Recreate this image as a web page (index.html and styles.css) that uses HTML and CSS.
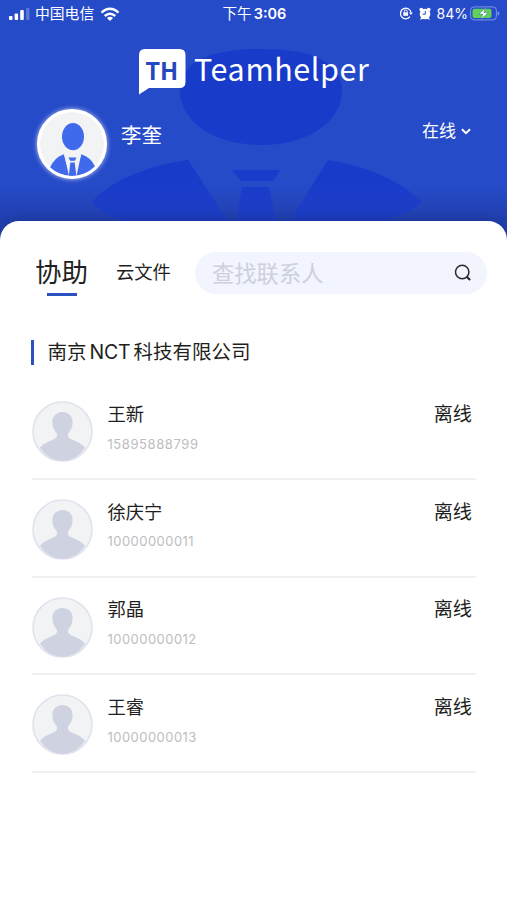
FILE: index.html
```html
<!DOCTYPE html>
<html lang="zh-CN">
<head>
<meta charset="utf-8">
<title>Teamhelper</title>
<link rel="stylesheet" href="styles.css">
</head>
<body>
<svg class="defs" width="0" height="0" aria-hidden="true">
  <symbol id="person" viewBox="0 0 62 62">
    <circle cx="31" cy="31" r="30" fill="#f2f3f5" stroke="#e0e2ee" stroke-width="1.600"/>
    <path d="M31 11.300c6 0 10.300 4.300 10.300 10.400 0 4.600-1.800 8.300-4.600 11.300-.8 3 .5 4.800 4 6.300 6.300 2.200 10.300 4.400 13.300 8.200A29.800 29.800 0 0 1 31 61 29.800 29.800 0 0 1 8 47.500c3-3.800 7-6 13.300-8.200 3.500-1.500 4.800-3.300 4-6.300-2.800-3-4.600-6.700-4.600-11.300 0-6.100 4.300-10.400 10.300-10.400z" fill="#cfd3e1"/>
  </symbol>
</svg>
<div class="app">
  <header class="hero">
    <svg class="hero-art" viewBox="0 0 507 245" aria-hidden="true">
      <path d="M180 90C181 62 209 49 261 49s80 13 81 41c0 32-34 55-81 55s-81-23-81-55z"/>
      <path d="M92 202C111 180 150 165 188 160L228 221V245H170C140 224 101 217 92 202z"/>
      <path d="M422 202C402 182 370 167 328 160L290 221V245H342C368 224 411 215 422 202z"/>
      <path d="M232 170h48l-7 11h-32zM242 187h27l7 34v24h-40v-24z"/>
    </svg>
    <div class="status">
      <div class="status-left">
        <svg width="22" height="14" viewBox="0 0 22 14"><g fill="#fff"><rect x="0" y="9" width="3.500" height="4" rx="1"/><rect x="5.600" y="6.500" width="3.500" height="6.500" rx="1"/><rect x="11.200" y="3" width="3.600" height="10" rx="1"/><rect x="17" y="1" width="3.500" height="12" rx="1" opacity=".25"/></g></svg>
        <span class="carrier">中国电信</span>
        <svg width="20" height="15" viewBox="0 0 20 15" fill="none" stroke="#fff" stroke-width="2.400"><path d="M1.500 5.600Q10-1.900 18.500 5.600M4.700 9Q10 4.400 15.300 9"/><path d="M6.900 10.900Q10 8.500 13.100 10.900L10 14z" fill="#fff" stroke="none"/></svg>
      </div>
      <div class="clock">下午 <b>3:06</b></div>
      <div class="status-right">
        <svg width="14" height="14" viewBox="0 0 14 14" fill="none" stroke="#fff" stroke-width="1.300"><path d="M11 10.700A5.300 5.300 0 1 1 12 6.500"/><path d="M10.200 6.400h3.600L12 9z" fill="#fff" stroke="none"/><rect x="4.300" y="6.300" width="4.800" height="3.500" fill="#fff" stroke="none"/><path d="M5.200 6.500V5.400a1.500 1.500 0 0 1 3 0v1.100" stroke-width="1"/></svg>
        <svg class="alarm" width="12" height="13" viewBox="0 0 12 13"><g fill="#fff"><circle cx="6" cy="7" r="5.300"/><circle cx="2.300" cy="2.600" r="1.900"/><circle cx="9.700" cy="2.600" r="1.900"/><path d="M1 12.700l1.500-3 2 2zM11 12.700l-1.500-3-2 2z"/></g><path d="M6.300 4v3.200H3.700" fill="none" stroke="#264bc8" stroke-width="1"/></svg>
        <span class="percent">84%</span>
        <svg width="30" height="15" viewBox="0 0 30 15"><rect x=".6" y=".9" width="25.800" height="13" rx="3.500" fill="none" stroke="#7f96e2" stroke-width="1"/><rect x="2.500" y="2.700" width="19" height="9.400" rx="2" fill="#5fd257"/><path d="M27.600 5.200q1.900.5 1.900 2.200t-1.900 2.200z" fill="#7f96e2"/><path d="M15.500 1.900L8.600 8.100h4.200l-1.500 5 7-6.500h-4.500z" fill="#fff" stroke="#3e7c91" stroke-width=".6"/></svg>
      </div>
    </div>
    <div class="brand">
      <div class="bubble"><svg class="bubble-shape" width="47" height="46" viewBox="0 0 47 46"><path d="M6 0h34.500q6 0 6 6v27q0 6-6 6H10L0 45.500V6Q0 0 6 0z" fill="#fff"/></svg><span>TH</span></div>
      <span class="brand-name">Teamhelper</span>
    </div>
    <div class="profile">
      <div class="me">
        <svg width="64" height="64" viewBox="0 0 64 64"><circle cx="32" cy="32" r="32" fill="#f2f3f4"/><g fill="#4169ec"><ellipse cx="33" cy="24.700" rx="11" ry="13.600"/><path d="M23 42.500Q14.500 45.500 10 55.500a33 33 0 0 0 20 8.500L24 42.500z"/><path d="M42 42.500Q51 45.500 55 54.500a33 33 0 0 1-19.500 9.500L41 42.500z"/></g><path d="M24.300 43L29 64h7.500L41 43z" fill="#f2f3f4"/><path d="M28.500 45.500h8l-1.600 3.200h-4.700zM30.300 50.400h4.400l1.700 13.600h-7.600z" fill="#4169ec"/></svg>
      </div>
      <span class="my-name">李奎</span>
      <div class="presence">在线<svg width="10" height="7" viewBox="0 0 10 7" fill="none" stroke="#fff" stroke-width="2"><path d="M.9 1.200L5 5.200 9.100 1.200"/></svg></div>
    </div>
  </header>
  <main class="sheet">
    <nav class="tabs">
      <span class="tab active">协助</span>
      <span class="tab">云文件</span>
      <div class="search"><span>查找联系人</span><svg width="18" height="18" viewBox="0 0 18 18" fill="none" stroke="#29292e"><circle cx="8.200" cy="8" r="6.700" stroke-width="1.500"/><path d="M12.700 12.700l3.400 3.300" stroke-width="2.200"/></svg></div>
    </nav>
    <h1 class="company">南京<span>NCT</span>科技有限公司</h1>
    <ul class="contacts">
      <li><svg class="avatar"><use href="#person"/></svg><div class="info"><span class="name">王新</span><span class="phone first">15895888799</span></div><span class="state">离线</span></li>
      <li><svg class="avatar"><use href="#person"/></svg><div class="info"><span class="name">徐庆宁</span><span class="phone">10000000011</span></div><span class="state">离线</span></li>
      <li><svg class="avatar"><use href="#person"/></svg><div class="info"><span class="name">郭晶</span><span class="phone">10000000012</span></div><span class="state">离线</span></li>
      <li><svg class="avatar"><use href="#person"/></svg><div class="info"><span class="name">王睿</span><span class="phone">10000000013</span></div><span class="state">离线</span></li>
    </ul>
  </main>
</div>
</body>
</html>
```
FILE: styles.css
```css
* { box-sizing: border-box; }
body { margin: 0; font-family: Inter, "Noto Sans CJK SC", sans-serif; color: #1f1f22; background: #fff; }
svg { display: block; flex: none; }
.defs { position: absolute; }
.app { width: 507px; height: 900px; overflow: hidden; }
.hero { position: relative; height: 245px; color: #fff; background: linear-gradient(#264bc9 0, #264bc9 185px, #213fae 221px, #2442a9 245px); }
.hero-art { position: absolute; left: 0; top: 0; width: 507px; height: 245px; fill: #193bca; -webkit-mask-image: linear-gradient(#000 180px, rgba(0,0,0,.55) 221px); mask-image: linear-gradient(#000 180px, rgba(0,0,0,.55) 221px); }
.status { position: relative; display: grid; grid-template-columns: 1fr auto 1fr; align-items: center; height: 28px; padding: 0 7px 0 9px; }
.status-left, .status-right { display: flex; align-items: center; }
.status-left { height: 26px; }
.status-right { justify-content: flex-end; height: 26px; margin-top: -2px; }
.carrier { margin: 0 6px 0 4px; font-size: 14.800px; line-height: 20px; }
.clock { font-size: 14.500px; line-height: 20px; white-space: nowrap; }
.clock b { font-weight: 600; margin-left: -2px; }
.alarm { margin-left: 6px; }
.percent { margin: 0 2px 0 6px; font-size: 14px; }
.brand { position: relative; display: flex; align-items: flex-start; height: 69px; padding: 21px 0 0 138.500px; font-family: "Noto Sans CJK SC", sans-serif; }
.bubble { position: relative; width: 46px; height: 46px; color: #2448bd; font-size: 24px; font-weight: 700; line-height: 41px; text-align: center; }
.bubble-shape { position: absolute; left: 0; top: 0; }
.bubble span { position: relative; letter-spacing: -.3px; }
.brand-name { margin-left: 9.500px; margin-top: -1px; font-size: 30.500px; line-height: 41px; letter-spacing: .6px; }
.profile { position: relative; display: flex; align-items: flex-start; padding: 12px 36px 0 37px; }
.me { width: 70px; height: 70px; padding: 0; border: 3px solid #fff; border-radius: 50%; overflow: hidden; box-shadow: 0 0 5px rgba(255,255,255,.75); background: #fff; }
.my-name { margin: 13px 0 0 14px; font-size: 20.500px; line-height: 28px; }
.presence { display: flex; align-items: center; gap: 5px; margin: 10px 0 0 auto; font-size: 17px; line-height: 24px; }
.sheet { position: relative; height: 679px; margin-top: -24px; padding: 31px 20px 0 32px; border-radius: 19px 19px 0 0; background: #fff; box-shadow: 0 -2px 10px rgba(20,35,110,.3); }
.tabs { display: flex; align-items: center; height: 42px; }
.tab { font-size: 18.300px; line-height: 28px; margin-left: 28px; padding-bottom: 2px; white-space: nowrap; }
.tab.active { position: relative; margin-left: 3px; font-size: 26.500px; line-height: 38px; }
.tab.active::after { content: ""; position: absolute; left: 12px; bottom: -3px; width: 30px; height: 3px; background: #2b50c0; }
.search { display: flex; align-items: center; justify-content: space-between; width: 292px; height: 42px; margin-left: auto; padding: 0 15px 0 17px; border-radius: 21px; background: #f2f4fe; color: #cdd0da; font-size: 22.300px; }
.search span { padding-bottom: 3px; }
.company { display: flex; align-items: center; height: 25px; margin: 46px 0 0 -1px; padding-left: 13.500px; border-left: 3px solid #2b50c0; font-size: 19.500px; font-weight: 400; line-height: 27px; white-space: nowrap; }
.company span { margin: 0 3px; letter-spacing: -.2px; }
.contacts { margin: 17.400px 11px 0 0; padding: 0; list-style: none; }
.contacts li { display: flex; align-items: flex-start; height: 97.700px; padding-top: 19.500px; border-bottom: 2px solid #f0f0f1; }
.avatar { width: 61px; height: 61px; margin-left: -.5px; margin-top: -.5px; }
.info { display: flex; flex-direction: column; margin: -.8px 0 0 15px; }
.name { font-size: 18.300px; line-height: 26px; }
.phone { margin-top: 6.500px; font-size: 13px; line-height: 20px; letter-spacing: .46px; color: #bdbdbf; }
.phone.first { letter-spacing: .58px; }
.state { margin: -.8px 4px 0 auto; font-size: 19.200px; line-height: 26px; }
```
